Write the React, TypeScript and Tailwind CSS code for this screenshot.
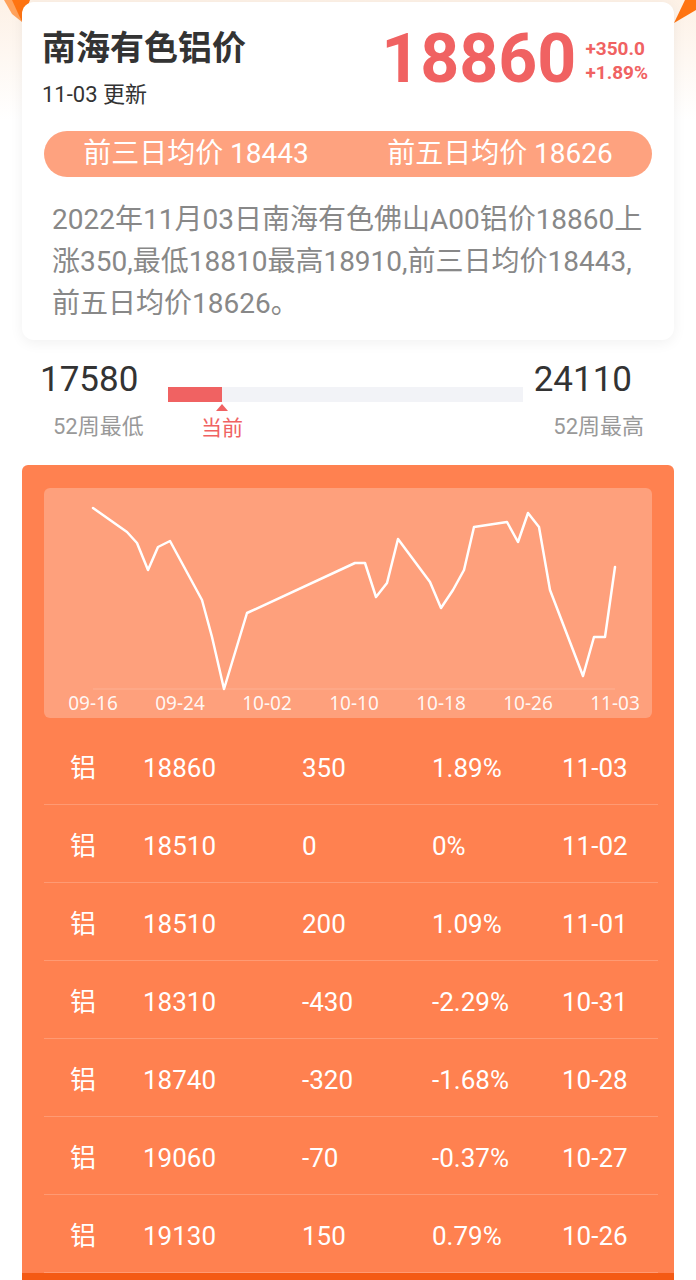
import React from "react";

const rows = [
  { price: "18860", change: "350", pct: "1.89%", date: "11-03" },
  { price: "18510", change: "0", pct: "0%", date: "11-02" },
  { price: "18510", change: "200", pct: "1.09%", date: "11-01" },
  { price: "18310", change: "-430", pct: "-2.29%", date: "10-31" },
  { price: "18740", change: "-320", pct: "-1.68%", date: "10-28" },
  { price: "19060", change: "-70", pct: "-0.37%", date: "10-27" },
  { price: "19130", change: "150", pct: "0.79%", date: "10-26" },
];

// chart points, already in box coordinates (608 x 230)
const points: [number, number][] = [
  [49, 20], [83, 44], [93, 55], [104, 82], [114, 59], [126, 53],
  [158, 112], [168, 149], [180, 201], [203, 125], [311, 75], [321, 75],
  [332, 109], [343, 95], [354, 51], [386, 94], [397, 120], [409, 102],
  [420, 82], [430, 39], [463, 34], [474, 54], [484, 25], [495, 39],
  [506, 102], [539, 188], [550, 149], [561, 149], [571, 79],
];

const labels = ["09-16", "09-24", "10-02", "10-10", "10-18", "10-26", "11-03"];

function Chart() {
  return (
    <svg width="608" height="230" viewBox="0 0 608 230" className="block">
      <line x1="49" y1="201" x2="571" y2="201" stroke="rgba(255,255,255,0.18)" strokeWidth="1" />
      <polyline
        points={points.map((p) => p.join(",")).join(" ")}
        fill="none"
        stroke="#fff"
        strokeWidth="2.5"
        strokeLinejoin="round"
        strokeLinecap="round"
      />
      {labels.map((l, i) => (
        <text
          key={l}
          x={49 + i * 87}
          y="222"
          textAnchor="middle"
          fill="rgba(255,255,255,0.92)"
          fontSize="19"
          fontFamily="'Noto Sans', sans-serif"
        >
          {l}
        </text>
      ))}
    </svg>
  );
}

export default function App() {
  const low = 17580;
  const high = 24110;
  // width of the red part of the range bar
  const fill = 54;

  return (
    <div className="relative w-[696px] min-h-[1280px] overflow-hidden bg-white font-['Roboto','Noto_Sans_CJK_SC',sans-serif]">
      {/* header backdrop */}
      <div className="absolute inset-x-0 top-0 h-[120px] bg-gradient-to-b from-[#fdf1e6] to-white" />
      <svg className="absolute left-0 top-0" width="30" height="26" viewBox="0 0 30 26">
        <polygon points="4,0 14,0 22,22 12,14" fill="#ffa25c" />
        <polygon points="12,0 30,0 22,22" fill="#ff7412" />
      </svg>
      <svg className="absolute right-0 top-0" width="24" height="26" viewBox="0 0 24 26">
        <polygon points="2,23 13,0 24,0 24,10" fill="#ff7412" />
      </svg>

      {/* summary card */}
      <div className="relative mx-[22px] mt-[2px] rounded-xl bg-white px-[22px] pb-[15px] shadow-[0_3px_14px_rgba(0,0,0,0.06)]">
        <div className="flex items-start justify-between">
          <div className="-ml-[2px] pt-[26px]">
            <div className="text-[34px] font-bold leading-[40px] text-[#333]">南海有色铝价</div>
            <div className="mt-[12px] text-[22px] leading-[30px] text-[#333]">11-03 更新</div>
          </div>
          <div className="mr-[4px] flex items-center gap-[9px] pt-[23px]">
            <span className="text-[68px] font-bold leading-none text-[#f06262]">18860</span>
            <div className="mt-[4px] flex flex-col text-[19px] font-bold leading-[24px] text-[#f06262]">
              <span>+350.0</span>
              <span>+1.89%</span>
            </div>
          </div>
        </div>

        <div className="mt-[21px] flex h-[46px] items-center rounded-full bg-[#fea27f] text-[28px] leading-none text-white">
          <div className="flex-1 text-center">前三日均价 18443</div>
          <div className="flex-1 text-center">前五日均价 18626</div>
        </div>

        <p className="ml-[8px] mt-[22px] w-[604px] text-[28px] leading-[42px] text-[#888]">
          2022年11月03日南海有色佛山A00铝价18860上涨350,最低18810最高18910,前三日均价18443,前五日均价18626。
        </p>
      </div>

      {/* 52 week range */}
      <div className="relative flex h-[125px]">
        <div className="w-[168px] pl-[40px] pt-[20px]">
          <div className="text-[35px] leading-[40px] text-[#333]">{low}</div>
          <div className="ml-[13px] mt-[13px] text-[22px] leading-[28px] text-[#999]">52周最低</div>
        </div>
        <div className="relative mt-[47px] h-[15px] w-[355px] bg-[#f2f3f7]">
          <div className="h-full bg-[#f06262]" style={{ width: fill }} />
          <div
            className="absolute top-[17px] flex -translate-x-1/2 flex-col items-center"
            style={{ left: fill }}
          >
            <div className="h-0 w-0 border-x-[6px] border-b-[7px] border-x-transparent border-b-[#f06262]" />
            <div className="mt-[4px] whitespace-nowrap text-[21px] leading-[26px] text-[#f06262]">当前</div>
          </div>
        </div>
        <div className="flex flex-1 flex-col items-end pr-[52px] pt-[20px]">
          <div className="mr-[12px] text-[35px] leading-[40px] text-[#333]">{high}</div>
          <div className="mt-[13px] text-[22px] leading-[28px] text-[#999]">52周最高</div>
        </div>
      </div>

      {/* history panel */}
      <div className="mx-[22px] overflow-hidden rounded-t-md bg-[#ff8150] pt-[23px]">
        <div className="mx-[22px] overflow-hidden rounded-md bg-[#fea07c]">
          <Chart />
        </div>
        <div className="ml-[22px] mr-[16px] mt-[9px]">
          {rows.map((r, i) => (
            <div
              key={i}
              className="grid h-[78px] grid-cols-[99px_159px_130px_130px_1fr] items-center border-b border-white/20 pt-[5px] text-[26px] leading-none text-white"
            >
              <span className="pl-[26px]">铝</span>
              <span>{r.price}</span>
              <span>{r.change}</span>
              <span>{r.pct}</span>
              <span>{r.date}</span>
            </div>
          ))}
        </div>
        <div className="h-[10px] bg-[#f45a14]" />
      </div>
    </div>
  );
}
